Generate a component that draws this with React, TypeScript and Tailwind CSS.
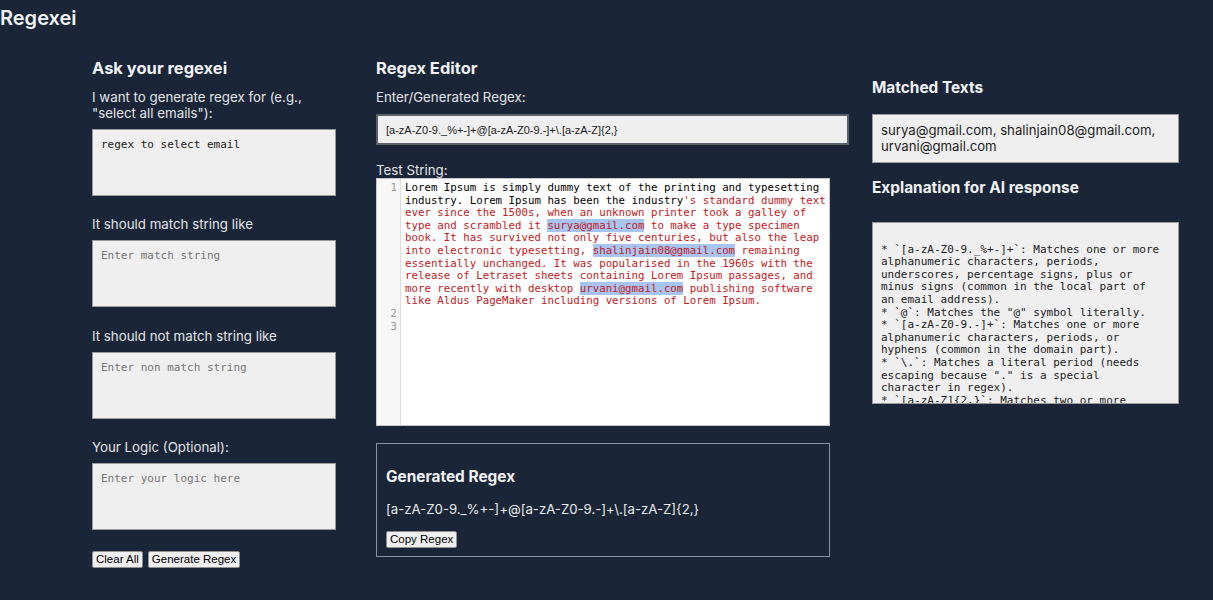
import React from "react";

const mono = "font-['DejaVu_Sans_Mono',monospace]";

const explanation = [
  "",
  "* `[a-zA-Z0-9._%+-]+`: Matches one or more",
  "alphanumeric characters, periods,",
  "underscores, percentage signs, plus or",
  "minus signs (common in the local part of",
  "an email address).",
  '* `@`: Matches the "@" symbol literally.',
  "* `[a-zA-Z0-9.-]+`: Matches one or more",
  "alphanumeric characters, periods, or",
  "hyphens (common in the domain part).",
  "* `\\.`: Matches a literal period (needs",
  'escaping because "." is a special',
  "character in regex).",
  "* `[a-zA-Z]{2,}`: Matches two or more",
  "alphabetic characters (top-level domain).",
  "",
  "This regex covers most common email formats.",
];

type Seg = { t: string; red?: boolean; hit?: boolean };

// visual lines of the CodeMirror-like editor
const editorLines: { num: string; segs: Seg[] }[] = [
  { num: "1", segs: [{ t: "Lorem Ipsum is simply dummy text of the printing and typesetting" }] },
  { num: "", segs: [{ t: "industry. Lorem Ipsum has been the industry" }, { t: "'s standard dummy text", red: true }] },
  { num: "", segs: [{ t: "ever since the 1500s, when an unknown printer took a galley of", red: true }] },
  {
    num: "",
    segs: [
      { t: "type and scrambled it ", red: true },
      { t: "surya@gmail.com", red: true, hit: true },
      { t: " to make a type specimen", red: true },
    ],
  },
  { num: "", segs: [{ t: "book. It has survived not only five centuries, but also the leap", red: true }] },
  {
    num: "",
    segs: [
      { t: "into electronic typesetting, ", red: true },
      { t: "shalinjain08@gmail.com", red: true, hit: true },
      { t: " remaining", red: true },
    ],
  },
  { num: "", segs: [{ t: "essentially unchanged. It was popularised in the 1960s with the", red: true }] },
  { num: "", segs: [{ t: "release of Letraset sheets containing Lorem Ipsum passages, and", red: true }] },
  {
    num: "",
    segs: [
      { t: "more recently with desktop ", red: true },
      { t: "urvani@gmail.com", red: true, hit: true },
      { t: " publishing software", red: true },
    ],
  },
  { num: "", segs: [{ t: "like Aldus PageMaker including versions of Lorem Ipsum.", red: true }] },
  { num: "2", segs: [{ t: "" }] },
  { num: "3", segs: [{ t: "" }] },
];

const regex = "[a-zA-Z0-9._%+-]+@[a-zA-Z0-9.-]+\\.[a-zA-Z]{2,}";

function Field({ label, placeholder, value }: { label: string; placeholder: string; value?: string }) {
  return (
    <div className="flex flex-col">
      <label className="text-[13.3px] leading-[16px] text-[#e2e4e8]">{label}</label>
      <textarea
        readOnly
        value={value}
        placeholder={placeholder}
        className={`mt-[8px] h-[67px] w-[244px] resize-none border border-[#9a9a9a] bg-[#efefef] px-[8px] py-[8px] text-[11px] leading-[13px] text-[#222] placeholder:text-[#777] outline-none ${mono}`}
      />
    </div>
  );
}

function Btn({ children }: { children: React.ReactNode }) {
  return (
    <button className="box-border h-[17px] rounded-[2px] border border-[#8f8f8f] bg-[#efefef] px-[3px] font-['Liberation_Sans',Arial,sans-serif] text-[11.5px] leading-[15px] text-black">
      {children}
    </button>
  );
}

export default function App() {
  return (
    <div className="min-h-screen bg-[#1a2637] font-['Inter',sans-serif] text-[#e8eaee]">
      <h1 className="pt-[4px] text-[20px] font-semibold leading-[28px] text-[#f0f2f5]">Regexei</h1>

      <div className="flex">
        {/* Ask column */}
        <div className="ml-[92px] w-[244px]">
          <h2 className="mt-[24px] text-[16.5px] font-bold leading-[24px] text-[#f0f2f5]">Ask your regexei</h2>
          <div className="mt-[9px]">
            <Field
              label={'I want to generate regex for (e.g., "select all emails"):'}
              placeholder=""
              value="regex to select email"
            />
          </div>
          <div className="mt-[20px]">
            <Field label="It should match string like" placeholder="Enter match string" />
          </div>
          <div className="mt-[21px]">
            <Field label="It should not match string like" placeholder="Enter non match string" />
          </div>
          <div className="mt-[20px]">
            <Field label="Your Logic (Optional):" placeholder="Enter your logic here" />
          </div>
          <div className="mt-[21px] flex gap-[5px]">
            <Btn>Clear All</Btn>
            <Btn>Generate Regex</Btn>
          </div>
        </div>

        {/* Editor column */}
        <div className="ml-[40px] w-[454px]">
          <h2 className="mt-[24px] text-[16.5px] font-bold leading-[24px] text-[#f0f2f5]">Regex Editor</h2>
          <label className="mt-[9px] block text-[13.3px] leading-[16px] text-[#e2e4e8]">Enter/Generated Regex:</label>
          <input
            readOnly
            value={regex}
            className="mt-[9px] h-[31px] w-[473px] border-2 border-[#5c6169] bg-[#efefef] px-[8px] font-['Liberation_Sans',Arial,sans-serif] text-[11px] text-[#222] outline-none"
          />
          <label className="mt-[17px] block text-[13.3px] leading-[16px] text-[#e2e4e8]">Test String:</label>
          <div className={`flex h-[248px] border border-[#c8c8c8] bg-white text-[10.75px] leading-[12.6px] ${mono}`}>
            <div className="w-[24px] shrink-0 border-r border-[#dddddd] bg-[#f7f7f7] pt-[3px] pr-[3px] text-right text-[#999]">
              {editorLines.map((l, i) => (
                <div key={i} className="h-[12.6px]">{l.num}</div>
              ))}
            </div>
            <div className="flex-1 pt-[3px] pl-[4px]">
              {editorLines.map((l, i) => (
                <div key={i} className="h-[12.6px] whitespace-pre text-black">
                  {l.segs.map((s, j) => (
                    <span key={j} className={`${s.red ? "text-[#c0201c]" : ""} ${s.hit ? "bg-[#a8c4f0]" : ""}`}>
                      {s.t}
                    </span>
                  ))}
                </div>
              ))}
            </div>
          </div>

          <div className="mt-[17px] border border-[#8a919c] px-[9px] pt-[23px] pb-[8px]">
            <h3 className="text-[15.4px] font-bold leading-[20px] text-[#f0f2f5]">Generated Regex</h3>
            <p className="mt-[13px] text-[13.2px] leading-[18px] text-[#e8eaee]">{regex}</p>
            <div className="mt-[13px] flex">
              <Btn>Copy Regex</Btn>
            </div>
          </div>
        </div>

        {/* Results column */}
        <div className="ml-[42px] w-[307px]">
          <h2 className="mt-[44px] text-[15.4px] font-bold leading-[24px] text-[#f0f2f5]">Matched Texts</h2>
          <div className="mt-[14px] h-[49px] border border-[#9a9a9a] bg-[#efefef] px-[8px] pt-[7px] text-[13.2px] leading-[16px] text-[#222]">
            surya@gmail.com, shalinjain08@gmail.com, urvani@gmail.com
          </div>
          <h2 className="mt-[13px] text-[15.4px] font-bold leading-[24px] text-[#f0f2f5]">Explanation for AI response</h2>
          <div
            className={`mt-[22px] h-[182px] overflow-x-hidden overflow-y-scroll border border-[#9a9a9a] bg-[#efefef] px-[8px] pt-[8px] text-[11px] leading-[12.6px] text-[#222] ${mono}`}
          >
            {explanation.map((l, i) => (
              <div key={i} className="h-[12.6px] whitespace-pre">{l}</div>
            ))}
          </div>
        </div>
      </div>
    </div>
  );
}
